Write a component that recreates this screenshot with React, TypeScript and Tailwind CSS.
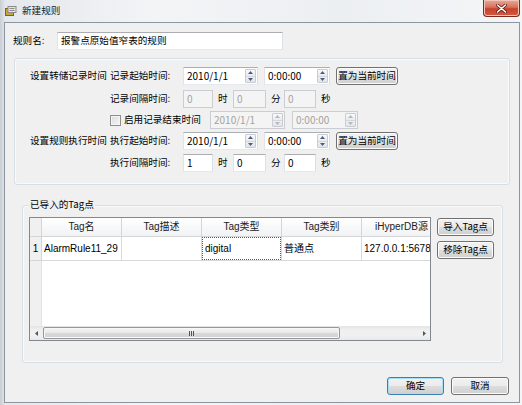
import React from 'react'

const cjk = "font-['Noto_Sans_CJK_SC',sans-serif]"
const ui = "font-['Liberation_Sans','Noto_Sans_CJK_SC',sans-serif]"

function Tri({ dir, color }: { dir: 'up' | 'down' | 'left' | 'right'; color: string }) {
  const d = {
    up: 'M0 3 L2.5 0 L5 3Z',
    down: 'M0 0 L2.5 3 L5 0Z',
    left: 'M3 0 L0 2.5 L3 5Z',
    right: 'M0 0 L3 2.5 L0 5Z',
  }[dir]
  const horiz = dir === 'up' || dir === 'down'
  return (
    <svg width={horiz ? 5 : 3} height={horiz ? 3 : 5} viewBox={horiz ? '0 0 5 3' : '0 0 3 5'}>
      <path d={d} fill={color} />
    </svg>
  )
}

function Spin({ disabled }: { disabled?: boolean }) {
  const c = disabled ? '#b4b8bf' : '#4b5d80'
  return (
    <div className="ml-auto mr-[1px] flex h-[14px] w-[11px] flex-col overflow-hidden rounded-[1px] border border-[#c9cdd3]">
      <div className="flex flex-1 items-center justify-center border-b border-[#d3d7dc] bg-[linear-gradient(#f8f9fa,#e9ecef)]">
        <Tri dir="up" color={c} />
      </div>
      <div className="flex flex-1 items-center justify-center bg-[linear-gradient(#eef0f2,#e1e4e8)]">
        <Tri dir="down" color={c} />
      </div>
    </div>
  )
}

function Field({ className, value, disabled, spin }: { className: string; value: string; disabled?: boolean; spin?: boolean }) {
  return (
    <div
      className={`flex h-[18px] shrink-0 items-center border pl-[3px] text-[10px] ${cjk} ${
        disabled ? 'border-[#cacdd2] bg-[#f4f4f4] text-[#a3a3a3]' : 'border-[#abadb3] border-b-[#e3e9ef] border-l-[#e2e3ea] border-r-[#dbdfe6] bg-white text-black'
      } ${className}`}
    >
      <span className="leading-none">{value}</span>
      {spin && <Spin disabled={disabled} />}
    </div>
  )
}

function Btn({ className, children, primary }: { className: string; children: React.ReactNode; primary?: boolean }) {
  return (
    <button
      className={`flex h-[18px] shrink-0 items-center justify-center rounded-[3px] border bg-[linear-gradient(#f2f2f2_0%,#ebebeb_48%,#dddddd_52%,#cfcfcf_100%)] text-[9.6px] leading-none text-black ${cjk} ${
        primary ? 'border-[#3c7fb1] shadow-[inset_0_0_0_1px_#a9ddf6]' : 'border-[#707070] shadow-[inset_0_0_0_1px_#fcfcfc]'
      } ${className}`}
    >
      {children}
    </button>
  )
}

function Label({ className, children }: { className: string; children: React.ReactNode }) {
  return <div className={`shrink-0 text-[9.6px] leading-none text-black ${cjk} ${className}`}>{children}</div>
}

function StartRow({ group, label }: { group: string; label: string }) {
  return (
    <div className="flex h-[20px] items-center">
      <Label className="w-[80px]">{group}</Label>
      <Label className="w-[73px]">{label}</Label>
      <Field className="w-[75px]" value="2010/1/1" spin />
      <Field className="ml-[6px] w-[66px]" value="0:00:00" spin />
      <Btn className="ml-[6px] w-[62px]">置为当前时间</Btn>
    </div>
  )
}

function IntervalRow({ label, values, disabled }: { label: string; values: string[]; disabled?: boolean }) {
  return (
    <div className="flex h-[20px] items-center">
      <div className="w-[80px] shrink-0" />
      <Label className="w-[73px]">{label}</Label>
      <Field className="w-[30px]" value={values[0]} disabled={disabled} />
      <Label className="ml-[5px] w-[15px]">时</Label>
      <Field className="w-[33px]" value={values[1]} disabled={disabled} />
      <Label className="ml-[5px] w-[13px]">分</Label>
      <Field className="w-[32px]" value={values[2]} disabled={disabled} />
      <Label className="ml-[5px]">秒</Label>
    </div>
  )
}

const cols = ['Tag名', 'Tag描述', 'Tag类型', 'Tag类别', 'iHyperDB源']
const row = ['AlarmRule11_29', '', 'digital', '普通点', '127.0.0.1:5678']

export default function App() {
  return (
    <div className="flex h-[405px] w-[522px] flex-col overflow-hidden bg-[linear-gradient(90deg,#c8cdd3_0%,#e4e8ec_1%,#f3f4f6_30%,#eceff2_65%,#f4f5f7_100%)]">
      {/* 标题栏 */}
      <div className="relative flex h-[22px] shrink-0 items-center pl-[5px]">
        <svg width="12" height="10" viewBox="0 0 12 10">
          <rect x="0.5" y="2.5" width="8" height="7" fill="#c9a23a" stroke="#7d6424" />
          <rect x="3" y="0.5" width="8" height="6" fill="#e9e4d3" stroke="#8a8a8a" />
          <rect x="4.5" y="2" width="5" height="1" fill="#8c8c8c" />
          <rect x="4.5" y="4" width="5" height="1" fill="#8c8c8c" />
        </svg>
        <span className={`ml-[5px] text-[9.6px] leading-none text-[#1b1b1b] ${cjk}`}>新建规则</span>
        <div className="absolute right-[2px] top-0 flex h-[17px] w-[37px] items-center justify-center rounded-b-[4px] border border-t-0 border-[#7d2a1d] bg-[linear-gradient(#eaa898_0%,#d7735d_45%,#c7412a_55%,#d45b3f_100%)] shadow-[inset_0_0_0_1px_#f3c4b8]">
          <svg width="11" height="9" viewBox="0 0 11 9">
            <path d="M1.5 1 L9.5 8 M9.5 1 L1.5 8" stroke="#5a1c12" strokeWidth="3" strokeLinecap="round" />
            <path d="M1.5 1 L9.5 8 M9.5 1 L1.5 8" stroke="#ffffff" strokeWidth="1.6" strokeLinecap="round" />
          </svg>
        </div>
      </div>

      {/* 客户区 */}
      <div className="mb-[2px] ml-[4px] flex w-[516px] flex-1 flex-col border border-[#8c96a1] bg-[#f0f0f0]">
        <div className="flex items-center pl-[8px] pt-[9px]">
          <Label className="w-[44px]">规则名:</Label>
          <div className={`flex h-[18px] w-[226px] items-center border border-[#abadb3] border-b-[#e3e9ef] border-l-[#e2e3ea] border-r-[#dbdfe6] bg-white pl-[3px] text-[9.6px] leading-none ${cjk}`}>
            报警点原始值窄表的规则
          </div>
        </div>

        {/* 时间设置 */}
        <div className="ml-[9px] mt-[8px] flex h-[127px] w-[496px] flex-col rounded-[3px] border border-[#d5dfe5] pl-[15px] pt-[7px] shadow-[inset_0_0_0_1px_#fafafa]">
          <StartRow group="设置转储记录时间" label="记录起始时间:" />
          <div className="mt-[3px]">
            <IntervalRow label="记录间隔时间:" values={['0', '0', '0']} disabled />
          </div>
          <div className="mt-[1px] flex h-[20px] items-center">
            <div className="w-[80px] shrink-0" />
            <div className="flex w-[100px] shrink-0 items-center">
              <div className="h-[11px] w-[11px] border border-[#8f8f8f] bg-[linear-gradient(135deg,#dcdcdc,#f6f6f6)] shadow-[inset_0_0_0_1px_#f4f4f4]" />
              <Label className="ml-[3px]">启用记录结束时间</Label>
            </div>
            <Field className="w-[75px]" value="2010/1/1" disabled spin />
            <Field className="ml-[7px] w-[66px]" value="0:00:00" disabled spin />
          </div>
          <div className="mt-[1px]">
            <StartRow group="设置规则执行时间" label="执行起始时间:" />
          </div>
          <div className="mt-[2px]">
            <IntervalRow label="执行间隔时间:" values={['1', '0', '0']} />
          </div>
        </div>

        {/* 已导入的Tag点 */}
        <div className="relative ml-[17px] mt-[20px] flex h-[158px] w-[481px] gap-[6px] rounded-[3px] border border-[#d5dfe5] pl-[6px] pt-[11px] shadow-[inset_0_0_0_1px_#fafafa]">
          <span className={`absolute -top-[6px] left-[6px] bg-[#f0f0f0] px-[1px] text-[9.6px] leading-none text-black ${cjk}`}>已导入的Tag点</span>

          <div className="flex h-[124px] w-[402px] shrink-0 flex-col border border-[#828790] bg-white">
            <div className="flex flex-1 flex-col overflow-hidden">
              <div className="flex h-[19px] w-max shrink-0">
                <div className="w-[12px] shrink-0 border-b border-r border-[#d5d5d5] bg-[#f0f0f0]" />
                {cols.map((c) => (
                  <div
                    key={c}
                    className={`flex w-[80px] shrink-0 items-center justify-center border-b border-r border-[#d5d5d5] bg-[linear-gradient(#ffffff,#f1f2f4)] text-[10px] leading-none text-[#222] ${ui}`}
                  >
                    {c}
                  </div>
                ))}
              </div>
              <div className="flex h-[24px] w-max shrink-0">
                <div className={`flex w-[12px] shrink-0 items-center justify-center border-b border-r border-[#d5d5d5] bg-[#f0f0f0] text-[10px] leading-none ${ui}`}>1</div>
                {row.map((v, i) => (
                  <div key={i} className="flex w-[80px] shrink-0 border-b border-r border-[#d8d8d8]">
                    <div className={`flex flex-1 items-center pl-[2px] text-[10px] leading-none text-black ${ui} ${i === 2 ? 'border border-dotted border-[#5a5a5a]' : ''}`}>
                      {v}
                    </div>
                  </div>
                ))}
              </div>
              <div className="flex flex-1">
                <div className="w-[12px] shrink-0 border-r border-[#e4e4e4] bg-[#f0f0f0]" />
              </div>
            </div>
            {/* 水平滚动条 */}
            <div className="flex h-[14px] shrink-0 items-center bg-[linear-gradient(#e4e4e4,#f0f0f0_30%,#f0f0f0_70%,#e8e8e8)]">
              <div className="flex w-[13px] shrink-0 justify-center">
                <Tri dir="left" color="#555" />
              </div>
              <div className="flex h-[12px] w-[297px] shrink-0 items-center justify-center rounded-[2px] border border-[#979797] bg-[linear-gradient(#f5f5f5,#e8e8e8_50%,#d9d9d9_51%,#d2d2d2)] shadow-[inset_0_0_0_1px_#f8f8f8]">
                <div className="flex gap-[1px]">
                  <div className="h-[5px] w-[1px] bg-[#555]" />
                  <div className="h-[5px] w-[1px] bg-[#555]" />
                  <div className="h-[5px] w-[1px] bg-[#555]" />
                </div>
              </div>
              <div className="flex-1" />
              <div className="flex w-[12px] shrink-0 justify-center">
                <Tri dir="right" color="#555" />
              </div>
            </div>
          </div>

          <div className="flex flex-col gap-[5px] pt-[1px]">
            <Btn className="w-[57px]">导入Tag点</Btn>
            <Btn className="w-[57px]">移除Tag点</Btn>
          </div>
        </div>

        <div className="mt-[14px] flex justify-end gap-[7px] pr-[10px]">
          <Btn className="w-[57px]" primary>确定</Btn>
          <Btn className="w-[58px]">取消</Btn>
        </div>
      </div>
    </div>
  )
}
